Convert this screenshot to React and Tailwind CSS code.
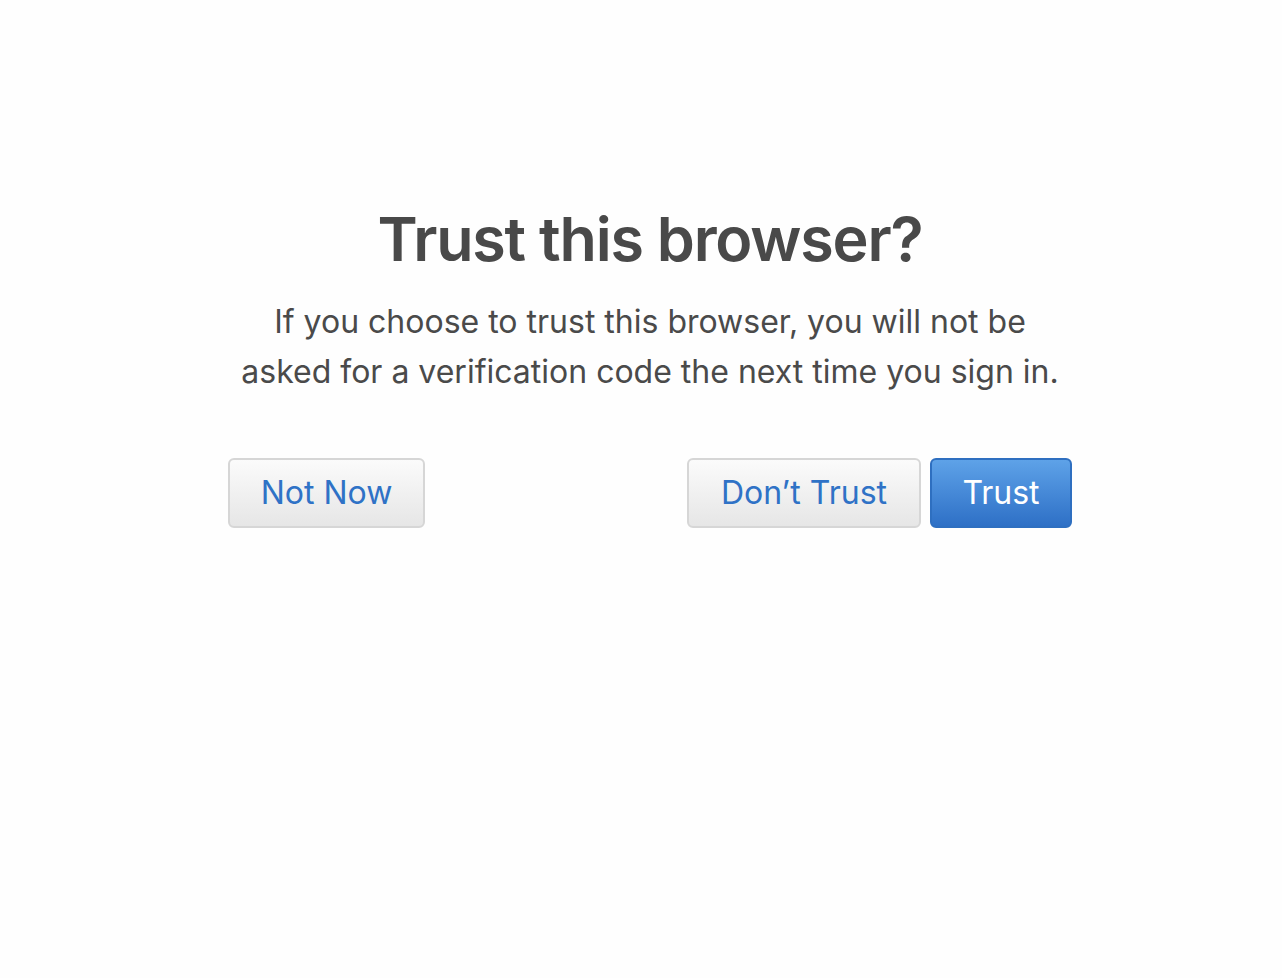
export default function App() {
  return (
    <div
      className="min-h-[978px] bg-[#fefefe] flex justify-center pl-[18px]"
      style={{ fontFamily: "Inter, 'Noto Sans', sans-serif" }}
    >
      <div className="w-[844px] pt-[196px] flex flex-col items-center">
        <h1 className="text-[61px] leading-[86px] font-semibold tracking-[-0.02em] text-[#494949]">
          Trust this browser?
        </h1>
        <p className="mt-[15px] text-[32px] leading-[50px] text-[#4a4a4a] text-center">
          If you choose to trust this browser, you will not be
          <br />
          asked for a verification code the next time you sign in.
        </p>
        <div className="w-full flex items-center mt-[61px]">
          <button className="w-[197px] h-[70px] rounded-[6px] border-2 border-[#d6d6d6] bg-gradient-to-b from-[#fbfbfb] to-[#e6e6e6] text-[32px] text-[#2f72c6]">
            Not Now
          </button>
          <div className="flex-1" />
          <button className="w-[234px] h-[70px] rounded-[6px] border-2 border-[#d6d6d6] bg-gradient-to-b from-[#fbfbfb] to-[#e6e6e6] text-[32px] text-[#2f72c6]">
            Don’t Trust
          </button>
          <button className="ml-[9px] w-[142px] h-[70px] rounded-[6px] border-2 border-[#2e6fc0] bg-gradient-to-b from-[#5ea2e8] to-[#2e70c6] text-[32px] text-white">
            Trust
          </button>
        </div>
      </div>
    </div>
  );
}
